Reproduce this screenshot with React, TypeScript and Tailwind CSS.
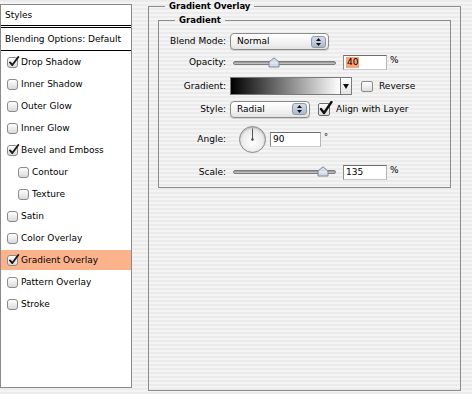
import React from "react";

const items: { label: string; checked?: boolean; indent?: boolean; selected?: boolean }[] = [
  { label: "Drop Shadow", checked: true },
  { label: "Inner Shadow" },
  { label: "Outer Glow" },
  { label: "Inner Glow" },
  { label: "Bevel and Emboss", checked: true },
  { label: "Contour", indent: true },
  { label: "Texture", indent: true },
  { label: "Satin" },
  { label: "Color Overlay" },
  { label: "Gradient Overlay", checked: true, selected: true },
  { label: "Pattern Overlay" },
  { label: "Stroke" },
];

function Check({ checked }: { checked?: boolean }) {
  return (
    <span className="relative inline-block w-[11px] h-[11px] shrink-0 rounded-[3px] border border-[#8a8a8a] bg-[linear-gradient(to_bottom,#ffffff,#d9d9d9)]">
      {checked && (
        <svg className="absolute left-[0px] top-[-2px]" width="12" height="12" viewBox="0 0 12 12">
          <path d="M2 6.4 L4.3 9 L10.3 1" stroke="#1a1a1a" strokeWidth="1.9" fill="none" strokeLinecap="round" strokeLinejoin="round" />
        </svg>
      )}
    </span>
  );
}

function Stepper() {
  return (
    <span className="ml-auto mr-[2px] flex h-[12px] w-[15px] flex-col items-center justify-center gap-[2px] rounded-[3px] bg-[linear-gradient(to_bottom,#d6dde8,#aeb9c9)] border border-[#8e98a8]">
      <svg width="5" height="3" viewBox="0 0 5 3"><path d="M0 3 L2.5 0 L5 3 Z" fill="#111" /></svg>
      <svg width="5" height="3" viewBox="0 0 5 3"><path d="M0 0 L2.5 3 L5 0 Z" fill="#111" /></svg>
    </span>
  );
}

function Select({ value, width }: { value: string; width: string }) {
  return (
    <div className={`${width} flex h-[17px] items-center rounded-[4px] border border-[#8b8b8b] bg-[linear-gradient(to_bottom,#ffffff,#f1f1f1_60%,#e2e2e2)] pl-[6px] shadow-[0_1px_1px_rgba(0,0,0,0.15)]`}>
      <span>{value}</span>
      <Stepper />
    </div>
  );
}

function Slider({ pos }: { pos: number }) {
  return (
    <div className="relative ml-[3px] h-full w-[103px]">
      <div className="absolute left-0 right-0 top-1/2 h-[4px] -translate-y-1/2 rounded-full border border-[#7c7c7c] bg-[linear-gradient(to_bottom,#8e8e8e,#cfcfcf)]" />
      <svg className="absolute top-1/2 -translate-y-[6px]" style={{ left: pos - 6 }} width="12" height="11" viewBox="0 0 12 11">
        <path d="M1 5 L6 0.8 L11 5 L11 10 L1 10 Z" fill="#d3dbe6" stroke="#7d8796" strokeWidth="1" />
        <path d="M2 6 L10 6" stroke="#eef2f7" strokeWidth="1" />
      </svg>
    </div>
  );
}

function Input({ width, children }: { width: string; children: React.ReactNode }) {
  return (
    <div className={`${width} flex h-[15px] items-center border border-t-[#6e6e6e] border-l-[#8a8a8a] border-r-[#b5b5b5] border-b-[#c8c8c8] bg-white pl-[2px]`}>
      {children}
    </div>
  );
}

function Group({ title, className, bodyClass, children }: { title: string; className: string; bodyClass: string; children?: React.ReactNode }) {
  return (
    <div className={`flex flex-col ${className}`}>
      <div className="flex h-[11px] items-center">
        <div className="h-[6px] w-[17px] self-end border-l border-t border-[#8c8c8c]" />
        <span className="px-[4px] text-[8.5px] font-bold leading-[11px]">{title}</span>
        <div className="h-[6px] flex-1 self-end border-r border-t border-[#8c8c8c]" />
      </div>
      <div className={`border-x border-b border-[#8c8c8c] ${bodyClass}`}>{children}</div>
    </div>
  );
}

export default function App() {
  const stripes =
    "bg-[image:repeating-linear-gradient(to_bottom,#ebebeb_0px,#ebebeb_2px,#f4f4f4_2px,#f4f4f4_4px)]";
  return (
    <div
      className={`flex h-[394px] w-[472px] items-start overflow-hidden ${stripes} font-['DejaVu_Sans',sans-serif] text-[9px] leading-[11px] text-black`}
    >
      {/* Left styles list */}
      <div className="mt-[4px] flex h-[384px] w-[132px] flex-col border border-[#8a8a8a] bg-white">
        <div className="flex h-[20px] items-center pl-[4px]">Styles</div>
        <div className="h-[3px] border-b-[3px] border-double border-black" />
        <div className="flex h-[23px] items-center border-b border-black pl-[4px]">Blending Options: Default</div>
        {items.map((it) => (
          <div key={it.label} className="flex h-[22px] items-center">
            <div
              className={`flex h-[20px] w-full items-center gap-[3px] ${it.indent ? "pl-[17px]" : "pl-[6px]"} ${it.selected ? "bg-[#fcb38c]" : ""}`}
            >
              <Check checked={it.checked} />
              <span>{it.label}</span>
            </div>
          </div>
        ))}
      </div>

      {/* Right Gradient Overlay group */}
      <Group title="Gradient Overlay" className="ml-[16px] mt-[1px] w-[313px]" bodyClass="h-[379px] pt-[3px]">
        <Group title="Gradient" className="mx-[9px]" bodyClass="pt-[5px] pb-[2px]">
          {/* Blend Mode */}
          <div className="flex h-[21px] items-center">
            <span className="w-[67px] text-right">Blend Mode:</span>
            <div className="ml-[4px]">
              <Select value="Normal" width="w-[99px]" />
            </div>
          </div>

          {/* Opacity */}
          <div className="flex h-[21px] items-center">
            <span className="w-[67px] text-right">Opacity:</span>
            <div className="ml-[4px] flex h-full items-center">
              <Slider pos={41} />
              <div className="ml-[7px]">
                <Input width="w-[44px]">
                  <span className="bg-[#fba47a] px-[1px]">40</span>
                </Input>
              </div>
              <span className="ml-[3px] -translate-y-[2px]">%</span>
            </div>
          </div>

          {/* Gradient */}
          <div className="flex h-[26px] items-center">
            <span className="w-[67px] text-right">Gradient:</span>
            <div className="ml-[4px] flex items-center">
              <div className="h-[18px] w-[111px] border border-[#7a7a7a] bg-[linear-gradient(to_right,#000000,#ffffff)]" />
              <div className="flex h-[18px] w-[11px] items-center justify-center border border-l-0 border-[#7a7a7a] bg-[linear-gradient(to_bottom,#ffffff,#e4e4e4)]">
                <svg width="6" height="5" viewBox="0 0 6 5"><path d="M0 0 L6 0 L3 5 Z" fill="#111" /></svg>
              </div>
              <div className="ml-[9px]">
                <span className="inline-block h-[11px] w-[12px] rounded-[2px] border border-[#8a8a8a] bg-[linear-gradient(to_bottom,#ffffff,#dedede)] align-middle" />
              </div>
              <span className="ml-[6px]">Reverse</span>
            </div>
          </div>

          {/* Style */}
          <div className="flex h-[20px] items-center">
            <span className="w-[67px] text-right">Style:</span>
            <div className="ml-[4px] flex items-center">
              <Select value="Radial" width="w-[80px]" />
              <span className="relative ml-[8px] inline-block h-[13px] w-[12px] rounded-[2px] border border-[#6e6e6e] bg-[linear-gradient(to_bottom,#ffffff,#dcdcdc)]">
                <svg className="absolute left-[0px] top-[-3px]" width="14" height="15" viewBox="0 0 14 15">
                  <path d="M2 8 L5 12 L12.5 1" stroke="#111" strokeWidth="2.4" fill="none" strokeLinecap="round" strokeLinejoin="round" />
                </svg>
              </span>
              <span className="ml-[6px]">Align with Layer</span>
            </div>
          </div>

          {/* Angle */}
          <div className="flex h-[40px] items-center">
            <span className="w-[67px] text-right">Angle:</span>
            <div className="ml-[4px] flex items-center">
              <div className="relative ml-[9px] h-[27px] w-[27px] rounded-full border border-[#8a8a8a] bg-[radial-gradient(circle_at_50%_60%,#ffffff,#e6e6e6_70%,#cfcfcf)] shadow-[inset_0_1px_2px_rgba(0,0,0,0.25)]">
                <svg className="absolute left-0 top-0" width="25" height="25" viewBox="0 0 25 25">
                  <path d="M12.5 12.5 L12.5 1.5" stroke="#555" strokeWidth="1" />
                  <circle cx="12.5" cy="12.5" r="1.2" fill="#444" />
                </svg>
              </div>
              <div className="ml-[4px]">
                <Input width="w-[51px]">90</Input>
              </div>
              <span className="ml-[3px] -translate-y-[2px] text-[8px]">°</span>
            </div>
          </div>

          {/* Scale */}
          <div className="flex h-[26px] items-center">
            <span className="w-[67px] text-right">Scale:</span>
            <div className="ml-[4px] flex h-full items-center">
              <Slider pos={90} />
              <div className="ml-[7px]">
                <Input width="w-[44px]">135</Input>
              </div>
              <span className="ml-[3px] -translate-y-[2px]">%</span>
            </div>
          </div>
        </Group>
      </Group>
    </div>
  );
}
